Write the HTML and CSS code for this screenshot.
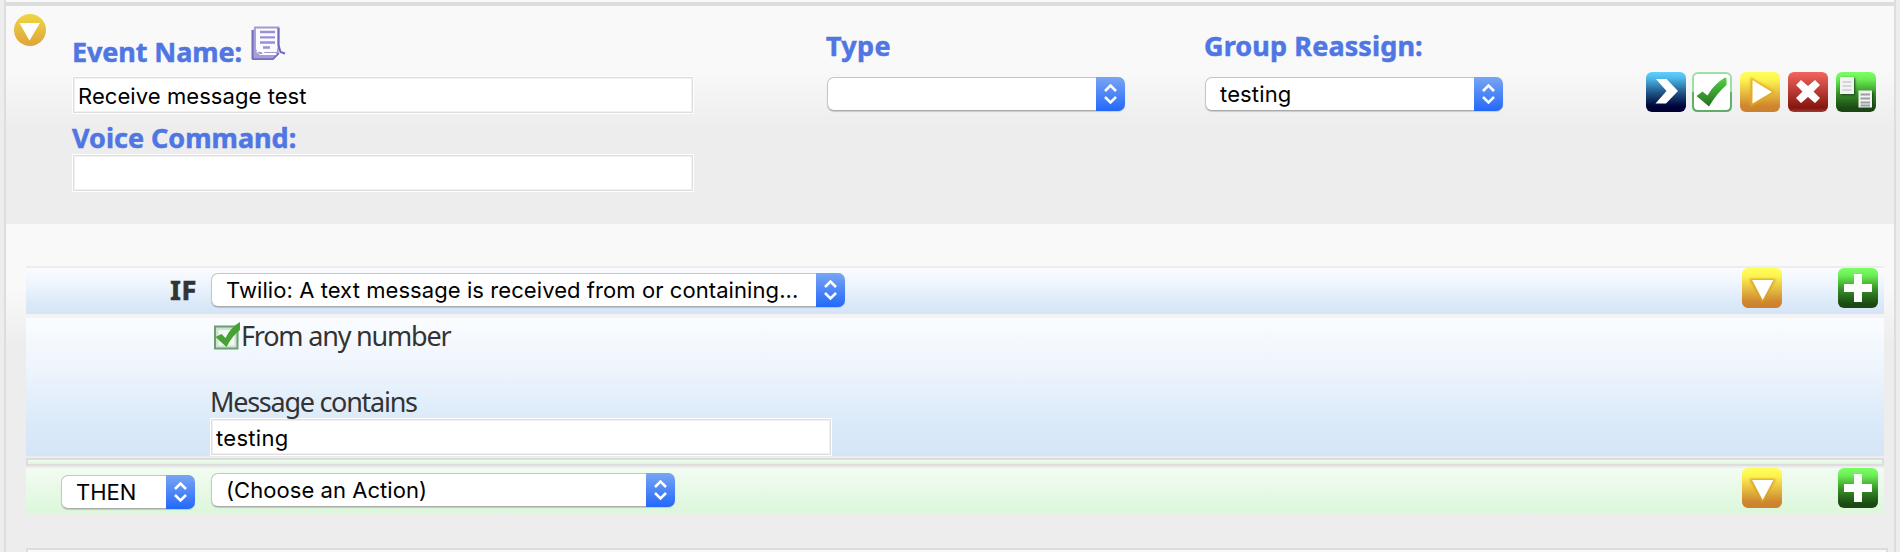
FILE: index.html
```html
<!DOCTYPE html>
<html lang="en">
<head>
<meta charset="utf-8">
<title>Event</title>
<link rel="stylesheet" href="styles.css">
</head>
<body>
<svg class="defs" width="0" height="0" aria-hidden="true">
  <defs>
    <linearGradient id="gold" x2="0" y2="1"><stop offset="0" stop-color="#ffff58"/><stop offset=".2" stop-color="#fdf350"/><stop offset=".85" stop-color="#cf862f"/><stop offset="1" stop-color="#cc812d"/></linearGradient>
    <linearGradient id="green" x2="0" y2="1"><stop offset="0" stop-color="#7cff66"/><stop offset=".18" stop-color="#6bef54"/><stop offset=".55" stop-color="#358c27"/><stop offset=".9" stop-color="#1b4a12"/><stop offset="1" stop-color="#1d4415"/></linearGradient>
    <linearGradient id="blue" x2="0" y2="1"><stop offset="0" stop-color="#5fd0ff"/><stop offset=".15" stop-color="#50b9ec"/><stop offset=".5" stop-color="#205a8a"/><stop offset=".85" stop-color="#01043a"/><stop offset="1" stop-color="#000030"/></linearGradient>
    <linearGradient id="red" x2="0" y2="1"><stop offset="0" stop-color="#f3655f"/><stop offset=".9" stop-color="#86150f"/><stop offset="1" stop-color="#a33b36"/></linearGradient>
    <linearGradient id="tick" x2="0" y2="1"><stop offset="0" stop-color="#55d145"/><stop offset="1" stop-color="#256f20"/></linearGradient>
    <linearGradient id="coin" x2="0" y2="1"><stop offset="0" stop-color="#eed645"/><stop offset="1" stop-color="#e0a43a"/></linearGradient>
    <filter id="glow" x="-30%" y="-30%" width="160%" height="160%"><feGaussianBlur stdDeviation="1.1"/></filter>
    <symbol id="down" viewBox="0 0 40 40"><rect width="40" height="40" rx="6" fill="url(#gold)"/><path d="M9 12h23L20.500 33z" fill="#d9a322" stroke="#d9a322" stroke-width="2" filter="url(#glow)"/><path d="M10 12h21.500L20.700 32z" fill="#fff"/></symbol>
    <symbol id="plus" viewBox="0 0 40 40"><rect width="40" height="40" rx="6" fill="url(#green)"/><path d="M16 6h8v10h10v8H24v10h-8V24H6v-8h10z" fill="#fff"/></symbol>
  </defs>
</svg>
<main class="panel">
  <section class="head">
    <svg class="coin" width="32" height="32" viewBox="0 0 32 32"><circle cx="16" cy="16" r="16" fill="url(#coin)"/><path d="M5.500 9h20.500L15.500 26.500z" fill="#fff"/></svg>
    <div class="names">
      <div class="title"><span class="label l-event">Event Name:</span>
        <svg class="note" width="36" height="36" viewBox="0 0 36 36"><path d="M5 2h24v21l3 5-5 7H2V6z" fill="#fff"/><path d="M5 2.500h23.500V22l-1 6H10l-5-3z" fill="#fbfbff" stroke="#a19bd6" stroke-width="1.800"/><path d="M2 6l3-3v23l5 4h18l-5 5H2z" fill="#a49fd8"/><path d="M2.500 5v29" stroke="#756db9" stroke-width="2"/><path d="M7 27q2-3 5-1l2 3h12" fill="none" stroke="#fff" stroke-width="2"/><path d="M2 34.200h21l6-6" fill="none" stroke="#7870bf" stroke-width="1.700"/><path d="M28.500 3v17l2 7 4.500 1.500" fill="none" stroke="#7069b8" stroke-width="2"/><path d="M10 7h15M10 12.300h15M10 17.500h15M13 22.500h7" stroke="#9691d8" stroke-width="2.300"/></svg>
      </div>
      <div class="input"><span class="t-receive">Receive message test</span></div>
      <div class="label l-voice">Voice Command:</div>
      <div class="input"></div>
    </div>
    <div class="field"><div class="label l-type">Type</div><div class="select"><span></span><b><svg width="15" height="22" viewBox="0 0 15 22"><path d="M2 8l5.500-5.500L13 8M2 14l5.500 5.500L13 14"/></svg></b></div></div>
    <div class="field"><div class="label l-group">Group Reassign:</div><div class="select"><span class="t-testing">testing</span><b><svg width="15" height="22" viewBox="0 0 15 22"><path d="M2 8l5.500-5.500L13 8M2 14l5.500 5.500L13 14"/></svg></b></div></div>
    <div class="tools">
      <svg width="40" height="40" viewBox="0 0 40 40"><rect width="40" height="40" rx="6" fill="url(#blue)"/><path d="M10 7h10.500L32 19 20 31.500H9.500L20.500 19z" fill="#fff"/></svg>
      <svg class="ok" width="40" height="40" viewBox="0 0 40 40"><rect x="1" y="1" width="38" height="38" rx="5" fill="#fff" stroke="#9ddfaa" stroke-width="2"/><path d="M1 20v14q0 5 5 5h28q5 0 5-5V20" fill="none" stroke="#62ae68" stroke-width="2"/><path d="M4.500 24l6-4.500 5 4Q22 12 33 5.500l1.500 1V13Q25 21 17 34.500z" fill="url(#tick)"/></svg>
      <svg width="40" height="40" viewBox="0 0 40 40"><rect width="40" height="40" rx="6" fill="url(#gold)"/><path d="M11.500 7v26L33 20z" fill="#e6a720" stroke="#e6a720" stroke-width="2" filter="url(#glow)"/><path d="M12.500 8v23.500L32 20z" fill="#fff"/></svg>
      <svg width="40" height="40" viewBox="0 0 40 40"><rect width="40" height="40" rx="6" fill="url(#red)"/><path d="M8 13l5-5 7 6 7-6 5 5-6.500 6.500L32 26l-5 5-7-6-7 6-5-5 6.500-6.500z" fill="#fff"/></svg>
      <svg width="40" height="40" viewBox="0 0 40 40"><rect width="40" height="40" rx="6" fill="url(#green)"/><path d="M5 6h14v17H5zM24 20h13v17H24z" fill="#14420d" filter="url(#glow)"/><path d="M4 5h14v17H4zM22.500 18.500H36v17H22.500z" fill="#f3f3f3"/><path d="M6.500 10h9M6.500 14h9M6.500 18h9" stroke="#ccc" stroke-width="1.500"/><path d="M24.500 22.500H34M24.500 26.500H34M24.500 30.500H34M24.500 33.500H34" stroke="#9aa0a2" stroke-width="1.800"/></svg>
    </div>
  </section>
  <section class="rules">
    <div class="row blue if-row">
      <div class="lead"><span class="dark t-if">IF</span></div>
      <div class="select w-if"><span class="t-twilio">Twilio: A text message is received from or containing...</span><b><svg width="15" height="22" viewBox="0 0 15 22"><path d="M2 8l5.500-5.500L13 8M2 14l5.500 5.500L13 14"/></svg></b></div>
      <div class="acts"><svg width="40" height="40"><use href="#down"/></svg><svg width="40" height="40"><use href="#plus"/></svg></div>
    </div>
    <div class="detail blue">
      <div class="any"><svg width="28" height="30" viewBox="0 0 28 30"><rect x="2" y="5.500" width="22.500" height="22" fill="#cfe3d3" stroke="#6b9f73" stroke-width="2"/><rect x="5.500" y="9" width="16" height="15.500" fill="#f2f8f3"/><path d="M2.500 16l6-3 4 4Q18 6 27 1v8q-8 6-13.500 17z" fill="#45a334"/></svg><span class="t-any">From any number</span></div>
      <div class="contains"><span class="t-contains">Message contains</span></div>
      <div class="input"><span class="t-message">testing</span></div>
    </div>
    <div class="divider"></div>
    <div class="row mint">
      <div class="lead then"><div class="select w-then"><span class="t-then">THEN</span><b><svg width="15" height="22" viewBox="0 0 15 22"><path d="M2 8l5.500-5.500L13 8M2 14l5.500 5.500L13 14"/></svg></b></div></div>
      <div class="select w-action"><span class="t-action">(Choose an Action)</span><b><svg width="15" height="22" viewBox="0 0 15 22"><path d="M2 8l5.500-5.500L13 8M2 14l5.500 5.500L13 14"/></svg></b></div>
      <div class="acts"><svg width="40" height="40"><use href="#down"/></svg><svg width="40" height="40"><use href="#plus"/></svg></div>
    </div>
    <div class="next"></div>
  </section>
</main>
</body>
</html>
```

FILE: styles.css
```css
* { box-sizing: border-box; }
body { margin: 0; height: 552px; overflow: hidden; background: #ededed; font-family: "Noto Sans", sans-serif; }
svg { display: block; flex: none; }
.defs { position: absolute; }
.panel { margin: 0 4px; height: 552px; border: solid #ddd; border-width: 0 2px; background: #f9f9f9; padding-top: 2px; }
.head { height: 222px; border-top: 4px solid #ddd; display: flex; background: linear-gradient(#f9f9f9 64px, #ededed 122px); }
.coin { margin: 8px 0 0 8px; }
.names { width: 622px; margin-left: 26px; padding-top: 15px; }
.title { display: flex; height: 55px; }
.label { color: #4f76e3; font-size: 27px; font-weight: 700; line-height: 32px; white-space: nowrap; -webkit-text-stroke: .5px #4f76e3; }
.title .label { margin-top: 15px; width: 178px; letter-spacing: -.1px; }
.note { margin-top: 4px; }
.l-voice { height: 40px; padding-top: 8px; }
.l-type { letter-spacing: .3px; }
.l-group { letter-spacing: .12px; }
.input { width: 622px; height: 38px; border: 1px solid #fff; background: #fff; box-shadow: inset 0 0 0 1px #ddd, inset 0 0 0 2px #f1f1f1; padding-left: 5px; font: 22px/38px Inter, sans-serif; color: #000; white-space: nowrap; }
.t-receive { letter-spacing: .07px; }
.t-message { letter-spacing: .3px; }
.field { width: 298px; margin-left: 80px; padding-top: 24px; }
.names + .field { margin-left: 133px; }
.field .label { height: 47px; margin-left: -1px; }
.select { display: flex; width: 298px; height: 34px; border-radius: 7px; background: #fff; border: solid #c6c6c6; border-width: 1px 0 1px 1px; border-bottom-color: #aaa; box-shadow: 0 1px 1px rgba(0,0,0,.16); font: 22px/32px Inter, sans-serif; color: #000; white-space: nowrap; flex: none; }
.select span { flex: 1; padding-left: 14px; }
.select .t-testing { letter-spacing: .15px; }
.select .t-twilio { letter-spacing: .075px; }
.select .t-action { letter-spacing: .05px; }
.select b { width: 29px; height: 34px; margin: -1px 0; border-radius: 0 7px 7px 0; background: linear-gradient(#78a5f5, #2368f8); display: flex; align-items: center; justify-content: center; }
.select b path { fill: none; stroke: #fff; stroke-width: 2.6; }
.tools { display: flex; gap: 8px; margin: 66px 0 0 143px; }
.tools .ok { margin-left: -2px; }
.rules { height: 328px; padding: 42px 10px 0 20px; background: linear-gradient(#f9f9f9 64px, #ededed 122px); }
.row { height: 46px; width: 1858px; display: flex; }
.if-row { box-shadow: 0 -2px #ededed; }
.rules .if-row { margin-top: 2px; }
.blue { background: linear-gradient(#fafcff, #eef5fd 35%, #dbeaf9 75%, #d5e5f7); }
.mint { background: linear-gradient(#f2fcf2, #dcf7da); }
.lead { width: 185px; text-align: right; padding: 6px 14px 0 0; }
.dark { color: #333; font-size: 27px; line-height: 32px; font-weight: 700; letter-spacing: .7px; -webkit-text-stroke: .7px #333; }
.w-if { width: 634px; margin-top: 5px; }
.w-action { width: 464px; margin-top: 5px; }
.then { padding: 7px 0 0 35px; text-align: left; }
.w-then { width: 134px; }
.acts { display: flex; gap: 56px; margin-left: auto; padding-right: 6px; }
.detail { width: 1858px; height: 138px; margin-top: 4px; padding-left: 184px; color: #333; font-size: 27px; line-height: 32px; white-space: nowrap; }
.any { display: flex; height: 66px; padding: 3px 0 0 3px; }
.any span { margin: -1px 0 0 0; letter-spacing: -1.2px; }
.contains { height: 34px; padding-top: 2px; letter-spacing: -1.27px; }
.divider { width: 1858px; height: 8px; margin: 2px 0; border: 2px solid #ddd; background: linear-gradient(#f2fcf2, #dcf7da); }
.next { width: 1862px; height: 4px; margin-top: 34px; border: 2px solid #ddd; border-bottom: 0; background: #f9f9f9; }
```
